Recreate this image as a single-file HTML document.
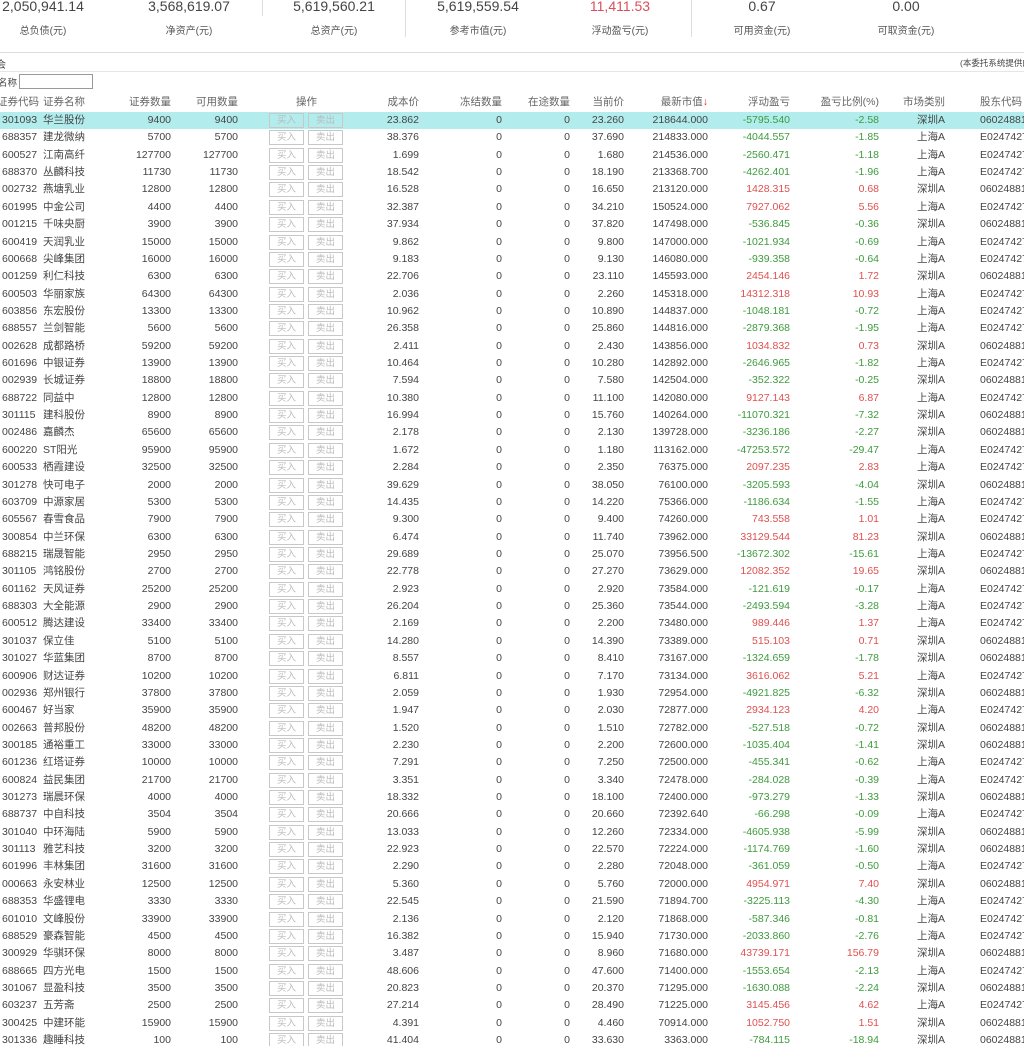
<!DOCTYPE html>
<html style="overflow:hidden"><head><meta charset="utf-8">
<style>
*{margin:0;padding:0;box-sizing:border-box}
body{width:1024px;height:1046px;overflow:hidden;background:#fff;font-family:"Liberation Sans","Noto Sans CJK SC",sans-serif;color:#444;position:relative}
.n{position:absolute;top:-2px;font-size:14px;color:#444;width:140px;text-align:center;transform:translateX(-50%)}
.l{position:absolute;top:22px;font-size:10px;color:#555;width:140px;text-align:center;transform:translateX(-50%)}
.vs{position:absolute;width:1px;background:#ddd;top:0}
.hl{position:absolute;left:0;width:1024px;height:1px;background:#ddd}
.t{position:absolute;font-size:10px;color:#444}
#tb{position:absolute;left:0;top:94px;width:1024px;overflow:hidden}
.r{position:relative;height:17.36px;font-size:10.5px;line-height:17.36px;white-space:nowrap;overflow:hidden;width:1024px}
.r span{position:absolute;top:0}
.h{color:#666;height:18px;font-size:10.5px}
.hi{background:#b2eced}
.a{left:2px}.b{left:43px}
.c3{right:853px}.c4{right:786px}.c6{right:605px}.c7{right:522px}.c8{right:454px}.c9{right:400px}.c10{right:316px}.c11{right:234px}.c12{right:145px}.c13{right:79px}.c14{left:980px}
.btn{position:absolute;top:1px;width:35px;height:15px;border:1px solid #c8c8c8;font-size:9.5px;line-height:13px;text-align:center;color:#bbb;font-style:normal}
.b1{left:269px}.b2{left:308px}
.g{color:#3d9b3d}.d{color:#e05050}
</style></head><body>
<div class="n" style="left:43px">2,050,941.14</div><div class="l" style="left:43px">总负债(元)</div>
<div class="n" style="left:189px">3,568,619.07</div><div class="l" style="left:189px">净资产(元)</div>
<div class="n" style="left:334px">5,619,560.21</div><div class="l" style="left:334px">总资产(元)</div>
<div class="n" style="left:478px">5,619,559.54</div><div class="l" style="left:478px">参考市值(元)</div>
<div class="n" style="left:620px;color:#d9505a">11,411.53</div><div class="l" style="left:620px">浮动盈亏(元)</div>
<div class="n" style="left:762px">0.67</div><div class="l" style="left:762px">可用资金(元)</div>
<div class="n" style="left:906px">0.00</div><div class="l" style="left:906px">可取资金(元)</div>
<div class="vs" style="left:262px;height:16px"></div>
<div class="vs" style="left:405px;height:37px"></div>
<div class="vs" style="left:691px;height:37px"></div>
<div class="hl" style="top:52px"></div>
<div class="t" style="left:-4px;top:56px">会</div>
<div class="t" style="left:960px;top:57px;font-size:8.5px;white-space:nowrap;width:64px;overflow:hidden">(本委托系统提供的</div>
<div class="hl" style="top:71px;background:#e6e6e6"></div>
<div class="t" style="left:-2px;top:75px;font-size:9.5px">名称</div>
<div style="position:absolute;left:19px;top:74px;width:74px;height:15px;border:1px solid #999"></div>
<div id="tb">
<div class="r h"><span class="a" style="left:-3px">证券代码</span><span class="b">证券名称</span><span class="c3">证券数量</span><span class="c4">可用数量</span><span style="left:296px">操作</span><span class="c6">成本价</span><span class="c7">冻结数量</span><span class="c8">在途数量</span><span class="c9">当前价</span><span class="c10">最新市值<b style="color:#e03030;font-weight:normal">↓</b></span><span class="c11">浮动盈亏</span><span class="c12">盈亏比例(%)</span><span class="c13">市场类别</span><span class="c14">股东代码</span></div>
<div class="r hi"><span class="a">301093</span><span class="b">华兰股份</span><span class="c3">9400</span><span class="c4">9400</span><i class="btn b1">买入</i><i class="btn b2">卖出</i><span class="c6">23.862</span><span class="c7">0</span><span class="c8">0</span><span class="c9">23.260</span><span class="c10">218644.000</span><span class="c11 g">-5795.540</span><span class="c12 g">-2.58</span><span class="c13">深圳A</span><span class="c14">0602488188</span></div>
<div class="r"><span class="a">688357</span><span class="b">建龙微纳</span><span class="c3">5700</span><span class="c4">5700</span><i class="btn b1">买入</i><i class="btn b2">卖出</i><span class="c6">38.376</span><span class="c7">0</span><span class="c8">0</span><span class="c9">37.690</span><span class="c10">214833.000</span><span class="c11 g">-4044.557</span><span class="c12 g">-1.85</span><span class="c13">上海A</span><span class="c14">E024742788</span></div>
<div class="r"><span class="a">600527</span><span class="b">江南高纤</span><span class="c3">127700</span><span class="c4">127700</span><i class="btn b1">买入</i><i class="btn b2">卖出</i><span class="c6">1.699</span><span class="c7">0</span><span class="c8">0</span><span class="c9">1.680</span><span class="c10">214536.000</span><span class="c11 g">-2560.471</span><span class="c12 g">-1.18</span><span class="c13">上海A</span><span class="c14">E024742788</span></div>
<div class="r"><span class="a">688370</span><span class="b">丛麟科技</span><span class="c3">11730</span><span class="c4">11730</span><i class="btn b1">买入</i><i class="btn b2">卖出</i><span class="c6">18.542</span><span class="c7">0</span><span class="c8">0</span><span class="c9">18.190</span><span class="c10">213368.700</span><span class="c11 g">-4262.401</span><span class="c12 g">-1.96</span><span class="c13">上海A</span><span class="c14">E024742788</span></div>
<div class="r"><span class="a">002732</span><span class="b">燕塘乳业</span><span class="c3">12800</span><span class="c4">12800</span><i class="btn b1">买入</i><i class="btn b2">卖出</i><span class="c6">16.528</span><span class="c7">0</span><span class="c8">0</span><span class="c9">16.650</span><span class="c10">213120.000</span><span class="c11 d">1428.315</span><span class="c12 d">0.68</span><span class="c13">深圳A</span><span class="c14">0602488188</span></div>
<div class="r"><span class="a">601995</span><span class="b">中金公司</span><span class="c3">4400</span><span class="c4">4400</span><i class="btn b1">买入</i><i class="btn b2">卖出</i><span class="c6">32.387</span><span class="c7">0</span><span class="c8">0</span><span class="c9">34.210</span><span class="c10">150524.000</span><span class="c11 d">7927.062</span><span class="c12 d">5.56</span><span class="c13">上海A</span><span class="c14">E024742788</span></div>
<div class="r"><span class="a">001215</span><span class="b">千味央厨</span><span class="c3">3900</span><span class="c4">3900</span><i class="btn b1">买入</i><i class="btn b2">卖出</i><span class="c6">37.934</span><span class="c7">0</span><span class="c8">0</span><span class="c9">37.820</span><span class="c10">147498.000</span><span class="c11 g">-536.845</span><span class="c12 g">-0.36</span><span class="c13">深圳A</span><span class="c14">0602488188</span></div>
<div class="r"><span class="a">600419</span><span class="b">天润乳业</span><span class="c3">15000</span><span class="c4">15000</span><i class="btn b1">买入</i><i class="btn b2">卖出</i><span class="c6">9.862</span><span class="c7">0</span><span class="c8">0</span><span class="c9">9.800</span><span class="c10">147000.000</span><span class="c11 g">-1021.934</span><span class="c12 g">-0.69</span><span class="c13">上海A</span><span class="c14">E024742788</span></div>
<div class="r"><span class="a">600668</span><span class="b">尖峰集团</span><span class="c3">16000</span><span class="c4">16000</span><i class="btn b1">买入</i><i class="btn b2">卖出</i><span class="c6">9.183</span><span class="c7">0</span><span class="c8">0</span><span class="c9">9.130</span><span class="c10">146080.000</span><span class="c11 g">-939.358</span><span class="c12 g">-0.64</span><span class="c13">上海A</span><span class="c14">E024742788</span></div>
<div class="r"><span class="a">001259</span><span class="b">利仁科技</span><span class="c3">6300</span><span class="c4">6300</span><i class="btn b1">买入</i><i class="btn b2">卖出</i><span class="c6">22.706</span><span class="c7">0</span><span class="c8">0</span><span class="c9">23.110</span><span class="c10">145593.000</span><span class="c11 d">2454.146</span><span class="c12 d">1.72</span><span class="c13">深圳A</span><span class="c14">0602488188</span></div>
<div class="r"><span class="a">600503</span><span class="b">华丽家族</span><span class="c3">64300</span><span class="c4">64300</span><i class="btn b1">买入</i><i class="btn b2">卖出</i><span class="c6">2.036</span><span class="c7">0</span><span class="c8">0</span><span class="c9">2.260</span><span class="c10">145318.000</span><span class="c11 d">14312.318</span><span class="c12 d">10.93</span><span class="c13">上海A</span><span class="c14">E024742788</span></div>
<div class="r"><span class="a">603856</span><span class="b">东宏股份</span><span class="c3">13300</span><span class="c4">13300</span><i class="btn b1">买入</i><i class="btn b2">卖出</i><span class="c6">10.962</span><span class="c7">0</span><span class="c8">0</span><span class="c9">10.890</span><span class="c10">144837.000</span><span class="c11 g">-1048.181</span><span class="c12 g">-0.72</span><span class="c13">上海A</span><span class="c14">E024742788</span></div>
<div class="r"><span class="a">688557</span><span class="b">兰剑智能</span><span class="c3">5600</span><span class="c4">5600</span><i class="btn b1">买入</i><i class="btn b2">卖出</i><span class="c6">26.358</span><span class="c7">0</span><span class="c8">0</span><span class="c9">25.860</span><span class="c10">144816.000</span><span class="c11 g">-2879.368</span><span class="c12 g">-1.95</span><span class="c13">上海A</span><span class="c14">E024742788</span></div>
<div class="r"><span class="a">002628</span><span class="b">成都路桥</span><span class="c3">59200</span><span class="c4">59200</span><i class="btn b1">买入</i><i class="btn b2">卖出</i><span class="c6">2.411</span><span class="c7">0</span><span class="c8">0</span><span class="c9">2.430</span><span class="c10">143856.000</span><span class="c11 d">1034.832</span><span class="c12 d">0.73</span><span class="c13">深圳A</span><span class="c14">0602488188</span></div>
<div class="r"><span class="a">601696</span><span class="b">中银证券</span><span class="c3">13900</span><span class="c4">13900</span><i class="btn b1">买入</i><i class="btn b2">卖出</i><span class="c6">10.464</span><span class="c7">0</span><span class="c8">0</span><span class="c9">10.280</span><span class="c10">142892.000</span><span class="c11 g">-2646.965</span><span class="c12 g">-1.82</span><span class="c13">上海A</span><span class="c14">E024742788</span></div>
<div class="r"><span class="a">002939</span><span class="b">长城证券</span><span class="c3">18800</span><span class="c4">18800</span><i class="btn b1">买入</i><i class="btn b2">卖出</i><span class="c6">7.594</span><span class="c7">0</span><span class="c8">0</span><span class="c9">7.580</span><span class="c10">142504.000</span><span class="c11 g">-352.322</span><span class="c12 g">-0.25</span><span class="c13">深圳A</span><span class="c14">0602488188</span></div>
<div class="r"><span class="a">688722</span><span class="b">同益中</span><span class="c3">12800</span><span class="c4">12800</span><i class="btn b1">买入</i><i class="btn b2">卖出</i><span class="c6">10.380</span><span class="c7">0</span><span class="c8">0</span><span class="c9">11.100</span><span class="c10">142080.000</span><span class="c11 d">9127.143</span><span class="c12 d">6.87</span><span class="c13">上海A</span><span class="c14">E024742788</span></div>
<div class="r"><span class="a">301115</span><span class="b">建科股份</span><span class="c3">8900</span><span class="c4">8900</span><i class="btn b1">买入</i><i class="btn b2">卖出</i><span class="c6">16.994</span><span class="c7">0</span><span class="c8">0</span><span class="c9">15.760</span><span class="c10">140264.000</span><span class="c11 g">-11070.321</span><span class="c12 g">-7.32</span><span class="c13">深圳A</span><span class="c14">0602488188</span></div>
<div class="r"><span class="a">002486</span><span class="b">嘉麟杰</span><span class="c3">65600</span><span class="c4">65600</span><i class="btn b1">买入</i><i class="btn b2">卖出</i><span class="c6">2.178</span><span class="c7">0</span><span class="c8">0</span><span class="c9">2.130</span><span class="c10">139728.000</span><span class="c11 g">-3236.186</span><span class="c12 g">-2.27</span><span class="c13">深圳A</span><span class="c14">0602488188</span></div>
<div class="r"><span class="a">600220</span><span class="b">ST阳光</span><span class="c3">95900</span><span class="c4">95900</span><i class="btn b1">买入</i><i class="btn b2">卖出</i><span class="c6">1.672</span><span class="c7">0</span><span class="c8">0</span><span class="c9">1.180</span><span class="c10">113162.000</span><span class="c11 g">-47253.572</span><span class="c12 g">-29.47</span><span class="c13">上海A</span><span class="c14">E024742788</span></div>
<div class="r"><span class="a">600533</span><span class="b">栖霞建设</span><span class="c3">32500</span><span class="c4">32500</span><i class="btn b1">买入</i><i class="btn b2">卖出</i><span class="c6">2.284</span><span class="c7">0</span><span class="c8">0</span><span class="c9">2.350</span><span class="c10">76375.000</span><span class="c11 d">2097.235</span><span class="c12 d">2.83</span><span class="c13">上海A</span><span class="c14">E024742788</span></div>
<div class="r"><span class="a">301278</span><span class="b">快可电子</span><span class="c3">2000</span><span class="c4">2000</span><i class="btn b1">买入</i><i class="btn b2">卖出</i><span class="c6">39.629</span><span class="c7">0</span><span class="c8">0</span><span class="c9">38.050</span><span class="c10">76100.000</span><span class="c11 g">-3205.593</span><span class="c12 g">-4.04</span><span class="c13">深圳A</span><span class="c14">0602488188</span></div>
<div class="r"><span class="a">603709</span><span class="b">中源家居</span><span class="c3">5300</span><span class="c4">5300</span><i class="btn b1">买入</i><i class="btn b2">卖出</i><span class="c6">14.435</span><span class="c7">0</span><span class="c8">0</span><span class="c9">14.220</span><span class="c10">75366.000</span><span class="c11 g">-1186.634</span><span class="c12 g">-1.55</span><span class="c13">上海A</span><span class="c14">E024742788</span></div>
<div class="r"><span class="a">605567</span><span class="b">春雪食品</span><span class="c3">7900</span><span class="c4">7900</span><i class="btn b1">买入</i><i class="btn b2">卖出</i><span class="c6">9.300</span><span class="c7">0</span><span class="c8">0</span><span class="c9">9.400</span><span class="c10">74260.000</span><span class="c11 d">743.558</span><span class="c12 d">1.01</span><span class="c13">上海A</span><span class="c14">E024742788</span></div>
<div class="r"><span class="a">300854</span><span class="b">中兰环保</span><span class="c3">6300</span><span class="c4">6300</span><i class="btn b1">买入</i><i class="btn b2">卖出</i><span class="c6">6.474</span><span class="c7">0</span><span class="c8">0</span><span class="c9">11.740</span><span class="c10">73962.000</span><span class="c11 d">33129.544</span><span class="c12 d">81.23</span><span class="c13">深圳A</span><span class="c14">0602488188</span></div>
<div class="r"><span class="a">688215</span><span class="b">瑞晟智能</span><span class="c3">2950</span><span class="c4">2950</span><i class="btn b1">买入</i><i class="btn b2">卖出</i><span class="c6">29.689</span><span class="c7">0</span><span class="c8">0</span><span class="c9">25.070</span><span class="c10">73956.500</span><span class="c11 g">-13672.302</span><span class="c12 g">-15.61</span><span class="c13">上海A</span><span class="c14">E024742788</span></div>
<div class="r"><span class="a">301105</span><span class="b">鸿铭股份</span><span class="c3">2700</span><span class="c4">2700</span><i class="btn b1">买入</i><i class="btn b2">卖出</i><span class="c6">22.778</span><span class="c7">0</span><span class="c8">0</span><span class="c9">27.270</span><span class="c10">73629.000</span><span class="c11 d">12082.352</span><span class="c12 d">19.65</span><span class="c13">深圳A</span><span class="c14">0602488188</span></div>
<div class="r"><span class="a">601162</span><span class="b">天风证券</span><span class="c3">25200</span><span class="c4">25200</span><i class="btn b1">买入</i><i class="btn b2">卖出</i><span class="c6">2.923</span><span class="c7">0</span><span class="c8">0</span><span class="c9">2.920</span><span class="c10">73584.000</span><span class="c11 g">-121.619</span><span class="c12 g">-0.17</span><span class="c13">上海A</span><span class="c14">E024742788</span></div>
<div class="r"><span class="a">688303</span><span class="b">大全能源</span><span class="c3">2900</span><span class="c4">2900</span><i class="btn b1">买入</i><i class="btn b2">卖出</i><span class="c6">26.204</span><span class="c7">0</span><span class="c8">0</span><span class="c9">25.360</span><span class="c10">73544.000</span><span class="c11 g">-2493.594</span><span class="c12 g">-3.28</span><span class="c13">上海A</span><span class="c14">E024742788</span></div>
<div class="r"><span class="a">600512</span><span class="b">腾达建设</span><span class="c3">33400</span><span class="c4">33400</span><i class="btn b1">买入</i><i class="btn b2">卖出</i><span class="c6">2.169</span><span class="c7">0</span><span class="c8">0</span><span class="c9">2.200</span><span class="c10">73480.000</span><span class="c11 d">989.446</span><span class="c12 d">1.37</span><span class="c13">上海A</span><span class="c14">E024742788</span></div>
<div class="r"><span class="a">301037</span><span class="b">保立佳</span><span class="c3">5100</span><span class="c4">5100</span><i class="btn b1">买入</i><i class="btn b2">卖出</i><span class="c6">14.280</span><span class="c7">0</span><span class="c8">0</span><span class="c9">14.390</span><span class="c10">73389.000</span><span class="c11 d">515.103</span><span class="c12 d">0.71</span><span class="c13">深圳A</span><span class="c14">0602488188</span></div>
<div class="r"><span class="a">301027</span><span class="b">华蓝集团</span><span class="c3">8700</span><span class="c4">8700</span><i class="btn b1">买入</i><i class="btn b2">卖出</i><span class="c6">8.557</span><span class="c7">0</span><span class="c8">0</span><span class="c9">8.410</span><span class="c10">73167.000</span><span class="c11 g">-1324.659</span><span class="c12 g">-1.78</span><span class="c13">深圳A</span><span class="c14">0602488188</span></div>
<div class="r"><span class="a">600906</span><span class="b">财达证券</span><span class="c3">10200</span><span class="c4">10200</span><i class="btn b1">买入</i><i class="btn b2">卖出</i><span class="c6">6.811</span><span class="c7">0</span><span class="c8">0</span><span class="c9">7.170</span><span class="c10">73134.000</span><span class="c11 d">3616.062</span><span class="c12 d">5.21</span><span class="c13">上海A</span><span class="c14">E024742788</span></div>
<div class="r"><span class="a">002936</span><span class="b">郑州银行</span><span class="c3">37800</span><span class="c4">37800</span><i class="btn b1">买入</i><i class="btn b2">卖出</i><span class="c6">2.059</span><span class="c7">0</span><span class="c8">0</span><span class="c9">1.930</span><span class="c10">72954.000</span><span class="c11 g">-4921.825</span><span class="c12 g">-6.32</span><span class="c13">深圳A</span><span class="c14">0602488188</span></div>
<div class="r"><span class="a">600467</span><span class="b">好当家</span><span class="c3">35900</span><span class="c4">35900</span><i class="btn b1">买入</i><i class="btn b2">卖出</i><span class="c6">1.947</span><span class="c7">0</span><span class="c8">0</span><span class="c9">2.030</span><span class="c10">72877.000</span><span class="c11 d">2934.123</span><span class="c12 d">4.20</span><span class="c13">上海A</span><span class="c14">E024742788</span></div>
<div class="r"><span class="a">002663</span><span class="b">普邦股份</span><span class="c3">48200</span><span class="c4">48200</span><i class="btn b1">买入</i><i class="btn b2">卖出</i><span class="c6">1.520</span><span class="c7">0</span><span class="c8">0</span><span class="c9">1.510</span><span class="c10">72782.000</span><span class="c11 g">-527.518</span><span class="c12 g">-0.72</span><span class="c13">深圳A</span><span class="c14">0602488188</span></div>
<div class="r"><span class="a">300185</span><span class="b">通裕重工</span><span class="c3">33000</span><span class="c4">33000</span><i class="btn b1">买入</i><i class="btn b2">卖出</i><span class="c6">2.230</span><span class="c7">0</span><span class="c8">0</span><span class="c9">2.200</span><span class="c10">72600.000</span><span class="c11 g">-1035.404</span><span class="c12 g">-1.41</span><span class="c13">深圳A</span><span class="c14">0602488188</span></div>
<div class="r"><span class="a">601236</span><span class="b">红塔证券</span><span class="c3">10000</span><span class="c4">10000</span><i class="btn b1">买入</i><i class="btn b2">卖出</i><span class="c6">7.291</span><span class="c7">0</span><span class="c8">0</span><span class="c9">7.250</span><span class="c10">72500.000</span><span class="c11 g">-455.341</span><span class="c12 g">-0.62</span><span class="c13">上海A</span><span class="c14">E024742788</span></div>
<div class="r"><span class="a">600824</span><span class="b">益民集团</span><span class="c3">21700</span><span class="c4">21700</span><i class="btn b1">买入</i><i class="btn b2">卖出</i><span class="c6">3.351</span><span class="c7">0</span><span class="c8">0</span><span class="c9">3.340</span><span class="c10">72478.000</span><span class="c11 g">-284.028</span><span class="c12 g">-0.39</span><span class="c13">上海A</span><span class="c14">E024742788</span></div>
<div class="r"><span class="a">301273</span><span class="b">瑞晨环保</span><span class="c3">4000</span><span class="c4">4000</span><i class="btn b1">买入</i><i class="btn b2">卖出</i><span class="c6">18.332</span><span class="c7">0</span><span class="c8">0</span><span class="c9">18.100</span><span class="c10">72400.000</span><span class="c11 g">-973.279</span><span class="c12 g">-1.33</span><span class="c13">深圳A</span><span class="c14">0602488188</span></div>
<div class="r"><span class="a">688737</span><span class="b">中自科技</span><span class="c3">3504</span><span class="c4">3504</span><i class="btn b1">买入</i><i class="btn b2">卖出</i><span class="c6">20.666</span><span class="c7">0</span><span class="c8">0</span><span class="c9">20.660</span><span class="c10">72392.640</span><span class="c11 g">-66.298</span><span class="c12 g">-0.09</span><span class="c13">上海A</span><span class="c14">E024742788</span></div>
<div class="r"><span class="a">301040</span><span class="b">中环海陆</span><span class="c3">5900</span><span class="c4">5900</span><i class="btn b1">买入</i><i class="btn b2">卖出</i><span class="c6">13.033</span><span class="c7">0</span><span class="c8">0</span><span class="c9">12.260</span><span class="c10">72334.000</span><span class="c11 g">-4605.938</span><span class="c12 g">-5.99</span><span class="c13">深圳A</span><span class="c14">0602488188</span></div>
<div class="r"><span class="a">301113</span><span class="b">雅艺科技</span><span class="c3">3200</span><span class="c4">3200</span><i class="btn b1">买入</i><i class="btn b2">卖出</i><span class="c6">22.923</span><span class="c7">0</span><span class="c8">0</span><span class="c9">22.570</span><span class="c10">72224.000</span><span class="c11 g">-1174.769</span><span class="c12 g">-1.60</span><span class="c13">深圳A</span><span class="c14">0602488188</span></div>
<div class="r"><span class="a">601996</span><span class="b">丰林集团</span><span class="c3">31600</span><span class="c4">31600</span><i class="btn b1">买入</i><i class="btn b2">卖出</i><span class="c6">2.290</span><span class="c7">0</span><span class="c8">0</span><span class="c9">2.280</span><span class="c10">72048.000</span><span class="c11 g">-361.059</span><span class="c12 g">-0.50</span><span class="c13">上海A</span><span class="c14">E024742788</span></div>
<div class="r"><span class="a">000663</span><span class="b">永安林业</span><span class="c3">12500</span><span class="c4">12500</span><i class="btn b1">买入</i><i class="btn b2">卖出</i><span class="c6">5.360</span><span class="c7">0</span><span class="c8">0</span><span class="c9">5.760</span><span class="c10">72000.000</span><span class="c11 d">4954.971</span><span class="c12 d">7.40</span><span class="c13">深圳A</span><span class="c14">0602488188</span></div>
<div class="r"><span class="a">688353</span><span class="b">华盛锂电</span><span class="c3">3330</span><span class="c4">3330</span><i class="btn b1">买入</i><i class="btn b2">卖出</i><span class="c6">22.545</span><span class="c7">0</span><span class="c8">0</span><span class="c9">21.590</span><span class="c10">71894.700</span><span class="c11 g">-3225.113</span><span class="c12 g">-4.30</span><span class="c13">上海A</span><span class="c14">E024742788</span></div>
<div class="r"><span class="a">601010</span><span class="b">文峰股份</span><span class="c3">33900</span><span class="c4">33900</span><i class="btn b1">买入</i><i class="btn b2">卖出</i><span class="c6">2.136</span><span class="c7">0</span><span class="c8">0</span><span class="c9">2.120</span><span class="c10">71868.000</span><span class="c11 g">-587.346</span><span class="c12 g">-0.81</span><span class="c13">上海A</span><span class="c14">E024742788</span></div>
<div class="r"><span class="a">688529</span><span class="b">豪森智能</span><span class="c3">4500</span><span class="c4">4500</span><i class="btn b1">买入</i><i class="btn b2">卖出</i><span class="c6">16.382</span><span class="c7">0</span><span class="c8">0</span><span class="c9">15.940</span><span class="c10">71730.000</span><span class="c11 g">-2033.860</span><span class="c12 g">-2.76</span><span class="c13">上海A</span><span class="c14">E024742788</span></div>
<div class="r"><span class="a">300929</span><span class="b">华骐环保</span><span class="c3">8000</span><span class="c4">8000</span><i class="btn b1">买入</i><i class="btn b2">卖出</i><span class="c6">3.487</span><span class="c7">0</span><span class="c8">0</span><span class="c9">8.960</span><span class="c10">71680.000</span><span class="c11 d">43739.171</span><span class="c12 d">156.79</span><span class="c13">深圳A</span><span class="c14">0602488188</span></div>
<div class="r"><span class="a">688665</span><span class="b">四方光电</span><span class="c3">1500</span><span class="c4">1500</span><i class="btn b1">买入</i><i class="btn b2">卖出</i><span class="c6">48.606</span><span class="c7">0</span><span class="c8">0</span><span class="c9">47.600</span><span class="c10">71400.000</span><span class="c11 g">-1553.654</span><span class="c12 g">-2.13</span><span class="c13">上海A</span><span class="c14">E024742788</span></div>
<div class="r"><span class="a">301067</span><span class="b">显盈科技</span><span class="c3">3500</span><span class="c4">3500</span><i class="btn b1">买入</i><i class="btn b2">卖出</i><span class="c6">20.823</span><span class="c7">0</span><span class="c8">0</span><span class="c9">20.370</span><span class="c10">71295.000</span><span class="c11 g">-1630.088</span><span class="c12 g">-2.24</span><span class="c13">深圳A</span><span class="c14">0602488188</span></div>
<div class="r"><span class="a">603237</span><span class="b">五芳斋</span><span class="c3">2500</span><span class="c4">2500</span><i class="btn b1">买入</i><i class="btn b2">卖出</i><span class="c6">27.214</span><span class="c7">0</span><span class="c8">0</span><span class="c9">28.490</span><span class="c10">71225.000</span><span class="c11 d">3145.456</span><span class="c12 d">4.62</span><span class="c13">上海A</span><span class="c14">E024742788</span></div>
<div class="r"><span class="a">300425</span><span class="b">中建环能</span><span class="c3">15900</span><span class="c4">15900</span><i class="btn b1">买入</i><i class="btn b2">卖出</i><span class="c6">4.391</span><span class="c7">0</span><span class="c8">0</span><span class="c9">4.460</span><span class="c10">70914.000</span><span class="c11 d">1052.750</span><span class="c12 d">1.51</span><span class="c13">深圳A</span><span class="c14">0602488188</span></div>
<div class="r"><span class="a">301336</span><span class="b">趣睡科技</span><span class="c3">100</span><span class="c4">100</span><i class="btn b1">买入</i><i class="btn b2">卖出</i><span class="c6">41.404</span><span class="c7">0</span><span class="c8">0</span><span class="c9">33.630</span><span class="c10">3363.000</span><span class="c11 g">-784.115</span><span class="c12 g">-18.94</span><span class="c13">深圳A</span><span class="c14">0602488188</span></div>
</div>
</body></html>
